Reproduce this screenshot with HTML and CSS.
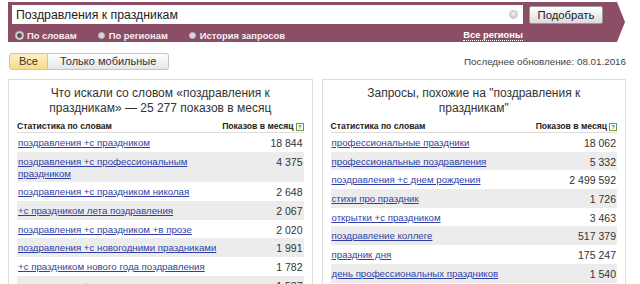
FILE: index.html
```html
<!DOCTYPE html>
<html lang="ru">
<head>
    <meta charset="UTF-8">
    <title>Подбор слов</title>
    <link rel="stylesheet" href="styles.css">
</head>
<body>
    <div class="search-bar">
        <div class="search-row">
            <div class="search-field">
                <span class="search-text">Поздравления к праздникам</span>
                <span class="clear-icon">×</span>
            </div>
            <button class="search-button">Подобрать</button>
        </div>
        <div class="mode-row">
            <label class="mode"><span class="radio checked"></span>По словам</label>
            <label class="mode"><span class="radio"></span>По регионам</label>
            <label class="mode"><span class="radio"></span>История запросов</label>
            <a class="regions">Все регионы</a>
        </div>
    </div>

    <div class="toolbar">
        <div class="tabs">
            <span class="tab active">Все</span>
            <span class="tab">Только мобильные</span>
        </div>
        <div class="updated">Последнее обновление: 08.01.2016</div>
    </div>

    <div class="panels">
        <div class="panel">
            <h2 class="panel-title">Что искали со словом «поздравления к праздникам» — 25 277 показов в месяц</h2>
            <table class="stats">
                <tr>
                    <th>Статистика по словам</th>
                    <th class="num">Показов в месяц<span class="help">?</span></th>
                </tr>
                <tr><td><a>поздравления +с праздником</a></td><td class="num">18 844</td></tr>
                <tr class="odd"><td><a>поздравления +с профессиональным праздником</a></td><td class="num">4 375</td></tr>
                <tr><td><a>поздравления +с праздником николая</a></td><td class="num">2 648</td></tr>
                <tr class="odd"><td><a>+с праздником лета поздравления</a></td><td class="num">2 067</td></tr>
                <tr><td><a>поздравления +с праздником +в прозе</a></td><td class="num">2 020</td></tr>
                <tr class="odd"><td><a>поздравления +с новогодними праздниками</a></td><td class="num">1 991</td></tr>
                <tr><td><a>+с праздником нового года поздравления</a></td><td class="num">1 782</td></tr>
                <tr class="odd"><td><a>поздравления +с днем праздника</a></td><td class="num">1 537</td></tr>
            </table>
        </div>
        <div class="panel">
            <h2 class="panel-title">Запросы, похожие на "поздравления к праздникам"</h2>
            <table class="stats">
                <tr>
                    <th>Статистика по словам</th>
                    <th class="num">Показов в месяц<span class="help">?</span></th>
                </tr>
                <tr><td><a>профессиональные праздники</a></td><td class="num">18 062</td></tr>
                <tr class="odd"><td><a>профессиональные поздравления</a></td><td class="num">5 332</td></tr>
                <tr><td><a>поздравления +с днем рождения</a></td><td class="num">2 499 592</td></tr>
                <tr class="odd"><td><a>стихи про праздник</a></td><td class="num">1 726</td></tr>
                <tr><td><a>открытки +с праздником</a></td><td class="num">3 463</td></tr>
                <tr class="odd"><td><a>поздравление коллеге</a></td><td class="num">517 379</td></tr>
                <tr><td><a>праздник дня</a></td><td class="num">175 247</td></tr>
                <tr class="odd"><td><a>день профессиональных праздников</a></td><td class="num">1 540</td></tr>
                <tr><td><a>поздравления +с днем учителя</a></td><td class="num">1 211</td></tr>
            </table>
        </div>
    </div>
</body>
</html>
```

FILE: styles.css
```css
body {
    margin: 0;
    font-family: "Liberation Sans", Arial, sans-serif;
    color: #333;
    background-color: #fff;
    overflow: hidden;
}

/* верхняя полоса поиска */
.search-bar {
    margin: 2px 0 0 8px;
    width: 617px;
    height: 40px;
    box-sizing: border-box;
    padding: 3px 0 0 4px;
    background-color: #8c4e66;
    clip-path: polygon(0 0, calc(100% - 8px) 0, 100% 50%, calc(100% - 8px) 100%, 0 100%);
}

.search-row {
    display: flex;
    align-items: flex-start;
}

.search-field {
    display: flex;
    align-items: center;
    justify-content: space-between;
    width: 511px;
    height: 19px;
    box-sizing: border-box;
    padding: 0 5px 0 4px;
    background-color: #fff;
}

.search-text {
    font-size: 12.3px;
    color: #222;
}

.clear-icon {
    display: flex;
    align-items: center;
    justify-content: center;
    width: 9px;
    height: 9px;
    border-radius: 50%;
    background-color: #d0d0d0;
    color: #fff;
    font-size: 9px;
    line-height: 9px;
}

.search-button {
    margin: 1px 0 0 6px;
    width: 74px;
    height: 18px;
    padding: 0;
    font-family: "Liberation Sans", Arial, sans-serif;
    font-size: 11.3px;
    color: #222;
    border: 1px solid #9a9a9a;
    border-radius: 2px;
    background: linear-gradient(#ffffff, #dcdcdc);
}

.mode-row {
    display: flex;
    align-items: center;
    width: 511px;
    height: 14px;
    margin-top: 4px;
    font-size: 9.4px;
    font-weight: bold;
    color: #f3eef0;
}

.mode {
    display: flex;
    align-items: center;
    margin-right: 21px;
}

.mode:first-child {
    margin-left: 4px;
}

.radio {
    width: 5px;
    height: 5px;
    margin: 0 4px 0 0;
    border-radius: 50%;
    background-color: #d8d8d8;
    border: 1px solid #c7b8bf;
}

.radio.checked {
    background-color: #555;
    border: 1px solid #eee;
    box-shadow: 0 0 0 1px #bbb;
}

.regions {
    margin-left: auto;
    color: #fff;
    border-bottom: 1px dotted #fff;
    line-height: 11px;
}

/* вкладки и дата */
.toolbar {
    display: flex;
    align-items: center;
    justify-content: space-between;
    margin: 11px 14px 0 9px;
}

.tabs {
    display: flex;
}

.tab {
    height: 17px;
    box-sizing: border-box;
    padding: 0 12px;
    font-size: 11px;
    line-height: 15px;
    border: 1px solid #c4c4c4;
    background: linear-gradient(#ffffff, #e6e6e6);
    color: #333;
}

.tab:first-child {
    border-radius: 3px 0 0 3px;
}

.tab:last-child {
    border-radius: 0 3px 3px 0;
    border-left: none;
}

.tab.active {
    padding: 0 9px;
    background: linear-gradient(#fdefc2, #f8dc8c);
    border-color: #d9c48a;
}

.updated {
    font-size: 9.8px;
    color: #444;
}

/* панели со статистикой */
.panels {
    display: flex;
    gap: 9px;
    margin: 9px 14px 0 8px;
}

.panel {
    flex: 1;
    border: 1px solid #dcdcdc;
    padding: 6px 8px 10px 8px;
}

.panel-title {
    margin: 0 25px;
    font-size: 12px;
    font-weight: normal;
    line-height: 15px;
    text-align: center;
    color: #333;
}

.stats {
    width: 100%;
    border-collapse: collapse;
}

.stats th {
    padding: 5px 0 1px;
    line-height: 10px;
    text-align: left;
    font-size: 8.6px;
    font-weight: bold;
    color: #222;
    white-space: nowrap;
    border-bottom: 1px solid #ddd;
}

.stats td {
    padding: 4px 0 2.7px;
    line-height: 12px;
    font-size: 9.7px;
    vertical-align: top;
}

.stats td:first-child {
    padding-left: 1px;
    width: 75%;
}

.stats .num {
    text-align: right;
    white-space: nowrap;
}

.stats td.num {
    font-size: 10.5px;
    padding-right: 1px;
}

.stats tr.odd td {
    background-color: #ececec;
}

.stats a {
    color: #2f3fa6;
    text-decoration: underline;
}

.help {
    display: inline-block;
    width: 6px;
    height: 6px;
    margin-left: 2px;
    border: 1px solid #6a9a3a;
    font-size: 6px;
    line-height: 6px;
    text-align: center;
    color: #3c7a1a;
    vertical-align: 0;
}
```
